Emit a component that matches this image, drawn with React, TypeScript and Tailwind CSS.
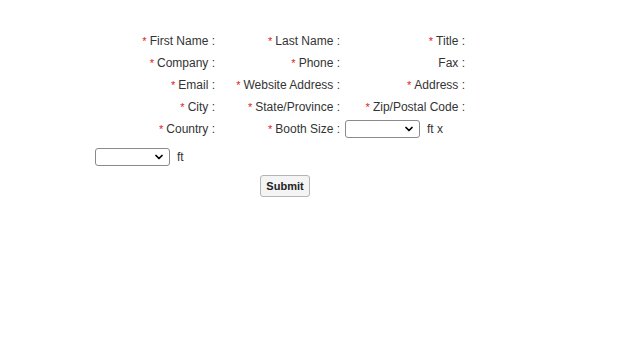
import { ChevronDown } from "lucide-react";

const ROWS: [string, boolean][][] = [
  [
    ["First Name", true],
    ["Last Name", true],
    ["Title", true],
  ],
  [
    ["Company", true],
    ["Phone", true],
    ["Fax", false],
  ],
  [
    ["Email", true],
    ["Website Address", true],
    ["Address", true],
  ],
  [
    ["City", true],
    ["State/Province", true],
    ["Zip/Postal Code", true],
  ],
];

function Label({ text, required }: { text: string; required: boolean }) {
  return (
    <div className="w-[120px] shrink-0 text-right">
      {required && <span className="text-[11px] text-[#e02020]">* </span>}
      {text} :
    </div>
  );
}

function SizeSelect() {
  return (
    <div className="relative flex h-[18px] w-[75px] items-center rounded-[3px] border border-[#8a8a8a] bg-white">
      <select className="h-full w-full appearance-none bg-transparent outline-none" aria-label="size">
        <option value=""></option>
      </select>
      <ChevronDown className="pointer-events-none absolute right-[4px] h-[12px] w-[12px] text-black" strokeWidth={3.5} />
    </div>
  );
}

export default function App() {
  return (
    <div className="h-[360px] w-[640px] bg-white font-['Liberation_Sans',Arial,sans-serif] text-[12px] text-[#333]">
      <div className="ml-[95px] w-[380px] pt-[30px]">
        {ROWS.map((row, i) => (
          <div key={i} className="flex h-[22px] items-center gap-[5px]">
            {row.map(([text, req]) => (
              <Label key={text} text={text} required={req} />
            ))}
          </div>
        ))}
        <div className="flex h-[22px] items-center gap-[5px]">
          <Label text="Country" required />
          <Label text="Booth Size" required />
          <SizeSelect />
          <span className="ml-[2px]">ft x</span>
        </div>
        <div className="mt-[6px] flex h-[22px] items-center gap-[7px]">
          <SizeSelect />
          <span>ft</span>
        </div>
        <div className="mt-[7px] flex justify-center">
          <button className="h-[22px] w-[50px] rounded-[3px] border border-[#b5b5b5] bg-[#f4f4f4] text-[11px] font-bold text-[#222]">
            Submit
          </button>
        </div>
      </div>
    </div>
  );
}
